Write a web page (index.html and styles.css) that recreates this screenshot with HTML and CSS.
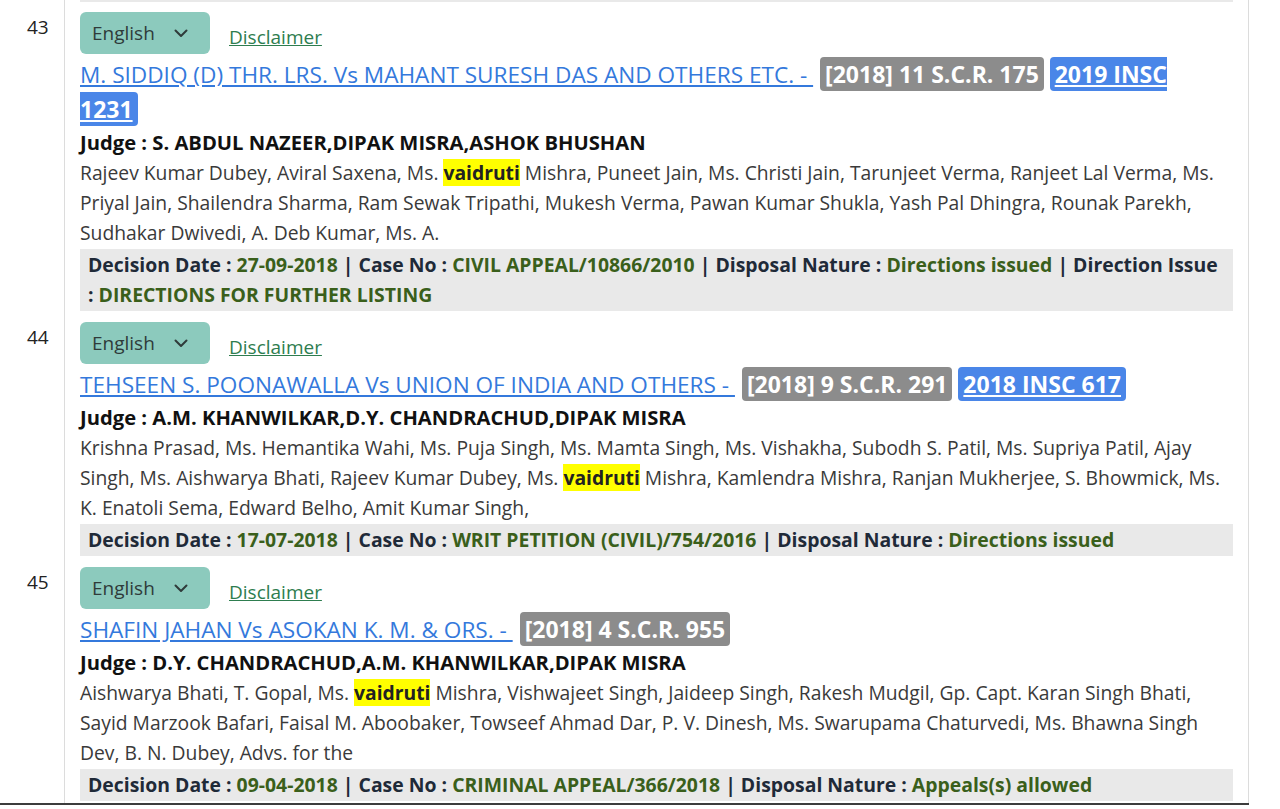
FILE: index.html
```html
<!DOCTYPE html>
<html lang="en">
<head>
<meta charset="utf-8">
<title>Judgments</title>
<link rel="stylesheet" href="styles.css">
</head>
<body>
<table class="results">
<tbody>
<tr class="tail-row">
  <td class="num"></td>
  <td class="content"><div class="tail-box"></div></td>
</tr>
<tr>
  <td class="num">43</td>
  <td class="content">
    <div class="lang-row">
      <span class="lang-btn">English <svg class="chev" viewBox="0 0 16 16" width="16" height="16"><path d="M2.5 5.5 8 11l5.5-5.5" fill="none" stroke="#2f3b3a" stroke-width="2" stroke-linecap="round" stroke-linejoin="round"/></svg></span>
      <a class="disclaimer" href="#">Disclaimer</a>
    </div>
    <div class="title"><a class="case-link" href="#">M. SIDDIQ (D) THR. LRS. Vs MAHANT SURESH DAS AND OTHERS ETC. - </a> <span class="badge badge-scr">[2018] 11 S.C.R. 175</span> <a class="badge badge-insc" href="#">2019 INSC 1231</a></div>
    <div class="judge">Judge : S. ABDUL NAZEER,DIPAK MISRA,ASHOK BHUSHAN</div>
    <div class="names">Rajeev Kumar Dubey, Aviral Saxena, Ms. <mark>vaidruti</mark> Mishra, Puneet Jain, Ms. Christi Jain, Tarunjeet Verma, Ranjeet Lal Verma, Ms. Priyal Jain, Shailendra Sharma, Ram Sewak Tripathi, Mukesh Verma, Pawan Kumar Shukla, Yash Pal Dhingra, Rounak Parekh, Sudhakar Dwivedi, A. Deb Kumar, Ms. A.</div>
    <div class="decision"><span class="lbl">Decision Date : </span><span class="val">27-09-2018</span> <span class="lbl">| Case No : </span><span class="val">CIVIL APPEAL/10866/2010</span> <span class="lbl">| Disposal Nature : </span><span class="val">Directions issued</span> <span class="lbl">| Direction Issue : </span><span class="val">DIRECTIONS FOR FURTHER LISTING</span></div>
  </td>
</tr>
<tr>
  <td class="num">44</td>
  <td class="content">
    <div class="lang-row">
      <span class="lang-btn">English <svg class="chev" viewBox="0 0 16 16" width="16" height="16"><path d="M2.5 5.5 8 11l5.5-5.5" fill="none" stroke="#2f3b3a" stroke-width="2" stroke-linecap="round" stroke-linejoin="round"/></svg></span>
      <a class="disclaimer" href="#">Disclaimer</a>
    </div>
    <div class="title"><a class="case-link" href="#">TEHSEEN S. POONAWALLA Vs UNION OF INDIA AND OTHERS - </a> <span class="badge badge-scr">[2018] 9 S.C.R. 291</span> <a class="badge badge-insc" href="#">2018 INSC 617</a></div>
    <div class="judge">Judge : A.M. KHANWILKAR,D.Y. CHANDRACHUD,DIPAK MISRA</div>
    <div class="names">Krishna Prasad, Ms. Hemantika Wahi, Ms. Puja Singh, Ms. Mamta Singh, Ms. Vishakha, Subodh S. Patil, Ms. Supriya Patil, Ajay Singh, Ms. Aishwarya Bhati, Rajeev Kumar Dubey, Ms. <mark>vaidruti</mark> Mishra, Kamlendra Mishra, Ranjan Mukherjee, S. Bhowmick, Ms. K. Enatoli Sema, Edward Belho, Amit Kumar Singh,</div>
    <div class="decision"><span class="lbl">Decision Date : </span><span class="val">17-07-2018</span> <span class="lbl">| Case No : </span><span class="val">WRIT PETITION (CIVIL)/754/2016</span> <span class="lbl">| Disposal Nature : </span><span class="val">Directions issued</span></div>
  </td>
</tr>
<tr class="last-row">
  <td class="num">45</td>
  <td class="content">
    <div class="lang-row">
      <span class="lang-btn">English <svg class="chev" viewBox="0 0 16 16" width="16" height="16"><path d="M2.5 5.5 8 11l5.5-5.5" fill="none" stroke="#2f3b3a" stroke-width="2" stroke-linecap="round" stroke-linejoin="round"/></svg></span>
      <a class="disclaimer" href="#">Disclaimer</a>
    </div>
    <div class="title"><a class="case-link" href="#">SHAFIN JAHAN Vs ASOKAN K. M. &amp; ORS. - </a> <span class="badge badge-scr">[2018] 4 S.C.R. 955</span></div>
    <div class="judge">Judge : D.Y. CHANDRACHUD,A.M. KHANWILKAR,DIPAK MISRA</div>
    <div class="names">Aishwarya Bhati, T. Gopal, Ms. <mark>vaidruti</mark> Mishra, Vishwajeet Singh, Jaideep Singh, Rakesh Mudgil, Gp. Capt. Karan Singh Bhati, Sayid Marzook Bafari, Faisal M. Aboobaker, Towseef Ahmad Dar, P. V. Dinesh, Ms. Swarupama Chaturvedi, Ms. Bhawna Singh Dev, B. N. Dubey, Advs. for the</div>
    <div class="decision"><span class="lbl">Decision Date : </span><span class="val">09-04-2018</span> <span class="lbl">| Case No : </span><span class="val">CRIMINAL APPEAL/366/2018</span> <span class="lbl">| Disposal Nature : </span><span class="val">Appeals(s) allowed</span></div>
  </td>
</tr>
</tbody>
</table>
</body>
</html>
```
FILE: styles.css
```css
html, body {
  margin: 0;
  padding: 0;
  background: #ffffff;
}
body {
  font-family: "Open Sans", "Noto Sans", sans-serif;
  color: #333333;
  font-size: 19.3px;
}
.results {
  border-collapse: separate;
  border-spacing: 0;
  width: 1249px;
  border-bottom: 2px solid #3c3c3c;
}
.results td {
  vertical-align: top;
  border-right: 1px solid #dcdcdc;
  padding-top: 10px;
  padding-bottom: 1px;
}
.results td.num {
  width: 37px;
  padding-left: 27px;
  padding-right: 0;
  line-height: 30px;
  font-size: 19px;
  color: #222;
}
.results td.content {
  padding-left: 15px;
  padding-right: 15px;
}
.results .tail-row td {
  padding-top: 0;
  padding-bottom: 0;
}
.results .last-row td {
  padding-bottom: 2px;
}
.tail-box {
  height: 2px;
  background: #e9e9e9;
}
.lang-row {
  display: flex;
  align-items: flex-end;
  padding-bottom: 3px;
}
.lang-btn {
  display: inline-flex;
  align-items: center;
  box-sizing: border-box;
  width: 130px;
  height: 42px;
  padding: 0 12px;
  background: #8ccabd;
  border-radius: 6px;
  color: #2f3b3a;
  font-size: 19px;
}
.chev {
  margin-left: auto;
  margin-right: 9px;
}
.disclaimer {
  margin-left: 19px;
  margin-bottom: 2px;
  line-height: 30px;
  font-size: 19px;
  color: #2e7d4f;
  text-decoration: underline;
}
.title {
  line-height: 35px;
  font-size: 22.6px;
  padding-right: 10px;
}
.case-link {
  color: #3479dc;
  text-decoration: underline;
}
.badge {
  font-size: 23px;
  font-weight: 700;
  color: #ffffff;
  padding: 1px 5px;
  border-radius: 4px;
}
.badge-scr {
  margin-left: 7px;
  background: #8c8c8c;
}
.badge-insc {
  background: #4a86e8;
  text-decoration: underline;
}
.judge {
  line-height: 31px;
  font-size: 20.2px;
  font-weight: 700;
  color: #111111;
}
.names {
  line-height: 30px;
  color: #3a3a3a;
}
mark {
  background: #ffff00;
  color: #222;
  font-weight: 700;
}
.decision {
  margin-top: 1px;
  padding: 1px 8px;
  background: #e9e9e9;
  line-height: 30px;
  font-size: 19.4px;
  font-weight: 700;
}
.decision .lbl {
  color: #1f2a38;
}
.decision .val {
  color: #3a5f1b;
}
```
